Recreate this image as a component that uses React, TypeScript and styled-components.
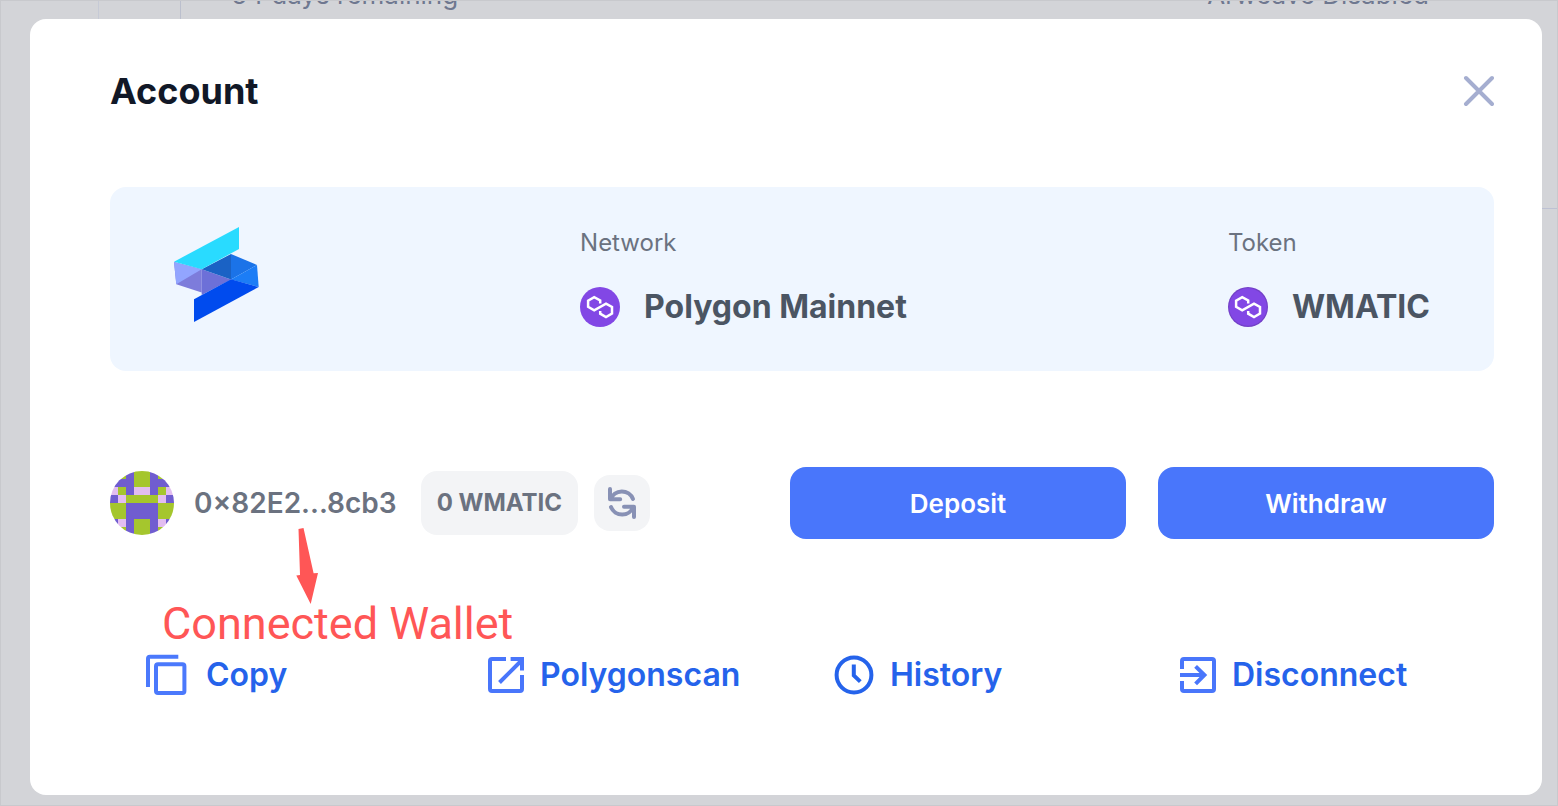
import React from "react";
import styled, { createGlobalStyle } from "styled-components";

const GlobalStyle = createGlobalStyle`
  *, *::before, *::after { box-sizing: border-box; }
  body {
    margin: 0;
    background: #d3d4d8;
    font-family: Inter, "Liberation Sans", sans-serif;
  }
  button { font-family: inherit; border: 0; margin: 0; cursor: pointer; }
  svg { display: block; flex: none; }
`;

const Page = styled.div`
  position: relative;
  min-height: 100vh;
  padding: 18px 15px 10px 29px;
  border: 1px solid #c8c9cd;
  background: #d3d4d8;
  display: flex;
`;

const Backdrop = styled.div`
  position: absolute;
  inset: 0;
  overflow: hidden;
  display: flex;
  align-items: flex-start;
`;

const Rail = styled.div<{ $width: number; $line: string }>`
  flex: none;
  width: ${(p) => p.$width}px;
  height: 208px;
  border-right: 1px solid ${(p) => p.$line};
`;

const BackdropHeader = styled.div`
  flex: 1;
  height: 232px;
  margin-top: -24px;
  padding: 0 128px 0 50px;
  border-bottom: 1px solid #bdc1d3;
  display: flex;
  justify-content: space-between;
  font-size: 26px;
  line-height: 36px;
  color: #6f7890;
`;

const Dialog = styled.section`
  position: relative;
  flex: 1;
  min-width: 0;
  padding: 44px 48px 80px 80px;
  border-radius: 16px;
  background: #fff;
`;

const DialogHeader = styled.header`
  display: flex;
  align-items: center;
  justify-content: space-between;
  height: 56px;
`;

const Title = styled.h1`
  margin: 0;
  font-size: 36px;
  line-height: 56px;
  font-weight: 700;
  color: #111827;
`;

const CloseButton = styled.button`
  padding: 0;
  background: none;
`;

const Summary = styled.div`
  display: flex;
  align-items: flex-start;
  justify-content: space-between;
  margin-top: 68px;
  padding: 40px 64px;
  border-radius: 16px;
  background: #eff6ff;
`;

const Field = styled.div`
  display: flex;
  flex-direction: column;
  gap: 24px;
`;

const FieldLabel = styled.div`
  font-size: 24px;
  line-height: 32px;
  color: #6b7280;
`;

const FieldValue = styled.div`
  display: flex;
  align-items: center;
  gap: 24px;
  font-size: 32px;
  line-height: 48px;
  font-weight: 700;
  color: #4b5563;
`;

const AccountRow = styled.div`
  position: relative;
  display: flex;
  align-items: center;
  margin-top: 96px;
`;

const Address = styled.span`
  margin: 0 24px 0 20px;
  font-size: 28px;
  line-height: 40px;
  font-weight: 600;
  color: #6b7280;
`;

const Balance = styled.span`
  padding: 0 16px;
  border-radius: 16px;
  background: #f3f4f6;
  font-size: 24px;
  line-height: 64px;
  font-weight: 700;
  color: #6b7280;
`;

const RefreshButton = styled.button`
  margin-left: 16px;
  padding: 0;
  border-radius: 16px;
  background: #f3f4f6;
`;

const Actions = styled.div`
  display: flex;
  gap: 32px;
  margin-left: auto;
`;

const ActionButton = styled.button`
  width: 336px;
  height: 72px;
  padding: 2px 0 0;
  border-radius: 16px;
  background: #4976fb;
  font-size: 26px;
  line-height: 32px;
  font-weight: 600;
  color: #fff;
`;

const Note = styled.div`
  position: absolute;
  left: 52px;
  top: 60px;
  pointer-events: none;
`;

const NoteArrow = styled.svg`
  margin-left: 132px;
`;

const NoteText = styled.div`
  font-family: Roboto, "Liberation Sans", sans-serif;
  font-size: 45px;
  line-height: 40px;
  color: #ff5656;
  white-space: nowrap;
`;

const Links = styled.nav`
  display: grid;
  grid-template-columns: repeat(4, 1fr);
  margin-top: 112px;
`;

const LinkItem = styled.a`
  display: flex;
  align-items: center;
  gap: 16px;
  height: 48px;
  padding-left: 32px;
  font-size: 32px;
  line-height: 48px;
  font-weight: 600;
  color: #2563eb;
  text-decoration: none;
`;

const BrandLogo = () => (
  <svg width="85" height="96" viewBox="0 0 85 96" aria-hidden="true">
    <path d="M0 35 27.7 42.3 27.7 65.5 2.3 57.3z" fill="#7d7cdb" />
    <path d="M0 35 27.7 42.3 2.3 57.3z" fill="#92a5ff" />
    <path d="M27.7 42.3 57 52.5 27.7 68z" fill="#6d70d8" />
    <path d="M27.7 42.3 57 27 57 52.5z" fill="#1a62c5" />
    <path d="M57 27 83 38 57 52.5z" fill="#1b73e8" />
    <path d="M83 38 84.7 60 57 52.5z" fill="#1c7df6" />
    <path d="M0 34.7 65 0 65 22 27.7 42.3z" fill="#29dbff" />
    <path d="M20 72.3 57 52.3 84.7 60 20 95z" fill="#004bee" />
  </svg>
);

const PolygonIcon = ({ ringed = false }: { ringed?: boolean }) => (
  <svg width="40" height="40" viewBox="0 0 40 40" aria-hidden="true">
    <circle cx="20" cy="20" r="20" fill={ringed ? "#7340c8" : "#8247e5"} />
    {ringed && <circle cx="20" cy="20" r="18.8" fill="#8247e5" />}
    <path
      d="M20.2 16.4V13.4L14.2 10.1 8.1 13.6V19.9L14.2 23.4 26 16.6 32 20V26.6L26 30 20.2 26.7V23.9"
      fill="none"
      stroke="#fff"
      strokeWidth="2.5"
    />
  </svg>
);

const CloseIcon = () => (
  <svg width="31" height="32" viewBox="0 0 31 32" aria-hidden="true">
    <path d="M3 3 29 29M29 3 3 29" stroke="#a5aed0" strokeWidth="4" strokeLinecap="round" />
  </svg>
);

const G = "#a5c62d";
const P = "#705dd0";
const L = "#e2bdf0";
const avatarRows = [
  [G, G, P, G],
  [P, P, P, G],
  [L, G, P, L],
  [P, L, G, G],
  [G, G, P, P],
  [G, G, P, P],
  [P, L, P, G],
  [G, G, P, G],
];

const Avatar = () => (
  <svg width="64" height="64" viewBox="0 0 64 64" role="img" aria-label="Wallet avatar">
    <clipPath id="avatar-clip">
      <circle cx="32" cy="32" r="32" />
    </clipPath>
    <g clipPath="url(#avatar-clip)" shapeRendering="crispEdges">
      {avatarRows.map((row, y) =>
        [...row, ...[...row].reverse()].map((fill, x) => (
          <rect key={`${x}-${y}`} x={x * 8} y={y * 8} width="8" height="8" fill={fill} />
        ))
      )}
    </g>
  </svg>
);

const RefreshIcon = () => (
  <svg width="56" height="56" viewBox="0 0 56 56" aria-hidden="true">
    <g fill="none" stroke="#8891b5" strokeWidth="4" strokeLinecap="round" strokeLinejoin="round">
      <path d="M16 14V24.3H26.2M16.6 24.3A12 12 0 0 1 39 24" />
      <path d="M40 42V31.8H30M39.4 31.8A12 12 0 0 1 17 32" />
    </g>
  </svg>
);

const CopyIcon = () => (
  <svg width="48" height="48" viewBox="0 0 48 48" aria-hidden="true">
    <g fill="none" stroke="#4b79fc" strokeWidth="4">
      <path d="M6 36V7.7a2 2 0 0 1 2-2H36.3" />
      <rect x="14" y="13.3" width="28.4" height="28.7" rx="2" />
    </g>
  </svg>
);

const ExternalIcon = () => (
  <svg width="36" height="36" viewBox="0 0 36 36" aria-hidden="true">
    <g fill="none" stroke="#4976fb" strokeWidth="4">
      <path d="M18 2H4a2 2 0 0 0-2 2V32a2 2 0 0 0 2 2H32a2 2 0 0 0 2-2V18" />
      <path d="M22.6 2H34V13.4M11.5 25.5 34 3" />
    </g>
  </svg>
);

const HistoryIcon = () => (
  <svg width="40" height="40" viewBox="0 0 40 40" aria-hidden="true">
    <g fill="none" stroke="#2563eb">
      <circle cx="20" cy="20" r="17.4" strokeWidth="4" />
      <path d="M19.8 9.5V20.5L26.3 26.6" strokeWidth="4" />
    </g>
  </svg>
);

const DisconnectIcon = () => (
  <svg width="36" height="36" viewBox="0 0 36 36" aria-hidden="true">
    <g fill="none" stroke="#4976fb" strokeWidth="4">
      <path d="M2 12V4a2 2 0 0 1 2-2H32a2 2 0 0 1 2 2V32a2 2 0 0 1-2 2H4a2 2 0 0 1-2-2V24" />
      <path d="M0 18H24M15.6 9.4 24.4 18 15.6 26.8" />
    </g>
  </svg>
);

const links = [
  { label: "Copy", icon: <CopyIcon /> },
  { label: "Polygonscan", icon: <ExternalIcon /> },
  { label: "History", icon: <HistoryIcon /> },
  { label: "Disconnect", icon: <DisconnectIcon /> },
];

export default function App() {
  return (
    <>
      <GlobalStyle />
      <Page>
        <Backdrop aria-hidden="true">
          <Rail $width={98} $line="#c6cad6" />
          <Rail $width={82} $line="#bbbfcd" />
          <BackdropHeader>
            <span>64 days remaining</span>
            <span>Arweave Disabled</span>
          </BackdropHeader>
        </Backdrop>
        <Dialog role="dialog" aria-labelledby="account-title">
          <DialogHeader>
            <Title id="account-title">Account</Title>
            <CloseButton type="button" aria-label="Close">
              <CloseIcon />
            </CloseButton>
          </DialogHeader>
          <Summary>
            <BrandLogo />
            <Field>
              <FieldLabel>Network</FieldLabel>
              <FieldValue>
                <PolygonIcon />
                Polygon Mainnet
              </FieldValue>
            </Field>
            <Field>
              <FieldLabel>Token</FieldLabel>
              <FieldValue>
                <PolygonIcon ringed />
                WMATIC
              </FieldValue>
            </Field>
          </Summary>
          <AccountRow>
            <Avatar />
            <Address>0×82E2...8cb3</Address>
            <Balance>0 WMATIC</Balance>
            <RefreshButton type="button" aria-label="Refresh balance">
              <RefreshIcon />
            </RefreshButton>
            <Actions>
              <ActionButton type="button">Deposit</ActionButton>
              <ActionButton type="button">Withdraw</ActionButton>
            </Actions>
            <Note>
              <NoteArrow width="26" height="77" viewBox="0 0 26 77" aria-hidden="true">
                <path d="M4.5 2 9.5 1 19.6 46.2 24 46 16.7 77 2.3 48.6 6 48z" fill="#ff5656" />
              </NoteArrow>
              <NoteText>Connected Wallet</NoteText>
            </Note>
          </AccountRow>
          <Links aria-label="Account links">
            {links.map(({ label, icon }) => (
              <LinkItem key={label} href="#">
                {icon}
                {label}
              </LinkItem>
            ))}
          </Links>
        </Dialog>
      </Page>
    </>
  );
}
